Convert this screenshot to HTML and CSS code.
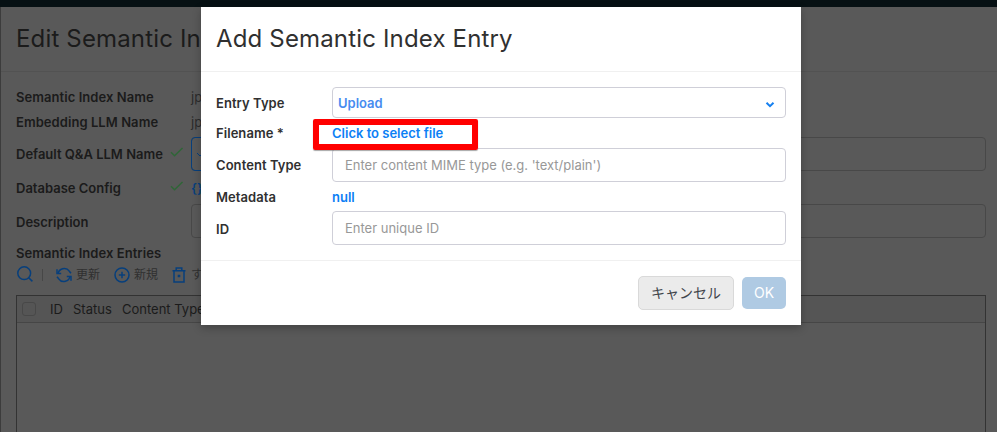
FILE: index.html
```html
<!DOCTYPE html>
<html lang="ja">
<head>
<meta charset="utf-8">
<title>Semantic Index</title>
<link rel="stylesheet" href="styles.css">
</head>
<body>
<div class="topbar"></div>
<main class="page">
  <h1 class="title">Edit Semantic In</h1>
  <div class="page-body">
    <div class="row short"><span class="label">Semantic Index Name</span><span></span><span class="value">jp</span></div>
    <div class="row short"><span class="label">Embedding LLM Name</span><span></span><span class="value">jp</span></div>
    <div class="row tall"><span class="label">Default Q&amp;A LLM Name</span>
      <svg class="check" viewBox="0 0 14 10"><path d="M1 5.2 4.6 8.7 12.5 1"/></svg>
      <div class="field"><div class="picker"><svg class="caret" viewBox="0 0 8 5"><path d="M1 1l3 3 3-3"/></svg></div></div></div>
    <div class="row tall"><span class="label">Database Config</span>
      <svg class="check" viewBox="0 0 14 10"><path d="M1 5.2 4.6 8.7 12.5 1"/></svg>
      <span class="json">{}</span></div>
    <div class="row tall description"><span class="label">Description</span><span></span><div class="field"></div></div>
    <div class="label entries">Semantic Index Entries</div>
    <div class="toolbar">
      <svg class="icon search" viewBox="0 0 16 16"><circle cx="7.2" cy="7.2" r="6.4"/><path d="M11.7 11.7 15.4 15.4"/></svg>
      <span class="sep"></span>
      <span class="tool refresh"><svg class="icon" viewBox="0 0 16 16"><path d="M2 7A6.2 6.2 0 0 1 13.3 4.2L15 6.3M14 9A6.2 6.2 0 0 1 2.7 11.8L1 9.7"/><path d="M1 2.2V6.4H5.2M15 13.8V9.6H10.8"/></svg>更新</span>
      <span class="tool add"><svg class="icon" viewBox="0 0 16 16"><circle cx="8" cy="8" r="7"/><path d="M8 4.8v6.4M4.8 8h6.4"/></svg>新規</span>
      <span class="tool"><svg class="icon" viewBox="0 0 16 16"><path d="M1.5 3.7h13M5.2 3.5V1h5.6v2.5M3 4v11h10V4"/><path class="thin" d="M6.8 7.8l2.4 2.4M9.2 7.8l-2.4 2.4"/></svg>す</span>
    </div>
    <div class="table"><div class="thead"><span class="box"></span><span class="th-id">ID</span><span class="th-status">Status</span><span>Content Type</span></div></div>
  </div>
</main>

<section class="dialog">
  <h2 class="title">Add Semantic Index Entry</h2>
  <div class="form">
    <div class="frow type"><span class="label">Entry Type</span><div class="input select"><span>Upload</span><svg class="chevron" viewBox="0 0 10 7"><path d="M1.5 1.7 5 5.1 8.5 1.7"/></svg></div></div>
    <div class="frow file"><span class="label">Filename *</span><span class="link">Click to select file</span></div>
    <div class="frow mime"><span class="label">Content Type</span><div class="input">Enter content MIME type (e.g. 'text/plain')</div></div>
    <div class="frow meta"><span class="label">Metadata</span><span class="link">null</span></div>
    <div class="frow ident"><span class="label">ID</span><div class="input">Enter unique ID</div></div>
  </div>
  <footer class="actions"><button class="cancel">キャンセル</button><button class="ok">OK</button></footer>
  <div class="highlight"></div>
</section>
</body>
</html>
```
FILE: styles.css
```css
* { box-sizing: border-box; }
body {
  margin: 0;
  height: 432px;
  overflow: hidden;
  background: #595959;
  font: 13px/20px Inter, "Noto Sans CJK JP", sans-serif;
  color: #1b1b1b;
}
svg { fill: none; stroke: currentColor; }
.topbar { height: 7px; background: #061013; }
.page { height: 425px; border-left: 1px solid #3c3c3c; display: flex; flex-direction: column; }
.title {
  margin: 0;
  height: 65px;
  padding: 0 15px;
  border-bottom: 1px solid #525252;
  font-size: 24px;
  line-height: 63px;
  font-weight: 400;
  letter-spacing: .16px;
  white-space: nowrap;
}
.page-body { flex: 1; display: flex; flex-direction: column; padding: 12px 11px 0 15px; }
.label { font-weight: 600; letter-spacing: .06px; white-space: nowrap; }
.row { display: grid; grid-template-columns: 154px 21px 1fr; align-items: center; }
.short { height: 25px; }
.tall { height: 34px; }
.row.short + .row.tall { margin-top: 3px; }
.row.tall > .label { margin-top: -1px; letter-spacing: 0; }
.row.description { margin-top: -1px; }
.row.description > .label { margin-top: 1px; }
.value { color: #2b2b2b; }
.check { width: 14px; height: 10px; margin-top: -4px; color: #2f6637; stroke-width: 1.5; }
.field { height: 34px; border: 1px solid #484848; border-radius: 4px; }
.picker { width: 400px; height: 34px; margin: -1px; border: 1px solid #073f7c; border-radius: 4px; }
.caret { display: block; width: 8px; height: 5px; margin: 14px 0 0 4px; color: #073f7c; }
.json { color: #073f7c; font-weight: 600; }
.entries { margin-top: 5px; }
.toolbar { display: flex; align-items: center; height: 24px; color: #303030; }
.icon { width: 16px; height: 16px; color: #073f7c; stroke-width: 1.5; flex: none; }
.thin { stroke-width: 1.2; }
.search { margin-left: 1px; margin-top: -2px; }
.sep { width: 1px; height: 12px; margin: 0 13px 0 9px; background: #474747; }
.tool { display: flex; align-items: center; gap: 4px; font-size: 12px; white-space: nowrap; }
.refresh { width: 58px; }
.add { width: 57px; }
.table { flex: 1; margin-top: 8px; border: 1px solid #333; border-bottom: 0; }
.thead { display: flex; align-items: center; height: 27px; border-bottom: 1px solid #464646; background: #555; white-space: nowrap; }
.box { width: 14px; height: 14px; margin: 0 14px 0 5px; border: 1px solid #484848; border-radius: 3px; }
.th-id { width: 23px; }
.th-status { width: 49px; }

.dialog {
  position: absolute;
  left: 201px;
  top: 7px;
  width: 600px;
  height: 318px;
  background: #fff;
  color: #303030;
  box-shadow: 0 3px 8px rgba(0, 0, 0, .25);
}
.dialog .title { border-color: #f0f0f0; }
.form { height: 189px; padding: 15px 15px 0; border-bottom: 1px solid #f0f0f0; }
.frow { display: grid; grid-template-columns: 116px 1fr; align-items: center; }
.type { height: 31px; }
.type .label { padding-top: 1px; }
.file { height: 30px; }
.mime { height: 34px; }
.meta { height: 29px; padding-top: 1px; }
.ident { height: 34px; }
.ident .label { padding-top: 2px; }
.input { height: 34px; padding: 0 12px; border: 1px solid #cfcfd8; border-radius: 4px; line-height: 32px; color: #989898; }
.select { height: 31px; display: flex; align-items: center; justify-content: space-between; padding: 0 10px 0 5px; color: #478cf0; font-weight: 600; line-height: 28px; }
.chevron { width: 10px; height: 7px; margin-top: 3px; color: #1680f0; stroke-width: 2; }
.link { color: #0b80f5; font-weight: 600; }
.actions { display: flex; align-items: center; justify-content: flex-end; gap: 8px; height: 64px; padding: 0 15px; }
button { font-family: inherit; font-size: 14px; padding: 0 0 2px; border-radius: 5px; }
.cancel { width: 96px; height: 34px; border: 1px solid #d9d9d9; background: #ebebeb; color: #41454b; }
.ok { width: 44px; height: 32px; border: 0; background: #afcae3; color: #fff; }
.highlight { position: absolute; left: 112px; top: 112px; width: 165px; height: 31px; border: 6px solid #f00; border-radius: 2px; box-shadow: 0 1px 1px rgba(0, 0, 0, .35); }
```
